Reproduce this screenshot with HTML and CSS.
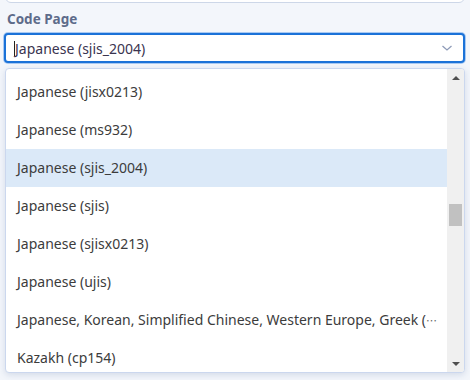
FILE: index.html
```html
<!DOCTYPE html>
<html lang="en">
<head>
    <meta charset="UTF-8">
    <title>Code Page</title>
    <link rel="stylesheet" href="styles.css">
</head>
<body>

<div class="prev-box"></div>

<div class="field">
    <label class="field-label">Code Page</label>
    <div class="select-box">
        <span class="caret"></span>
        <span class="select-value">Japanese (sjis_2004)</span>
        <svg class="chevron" width="12" height="8" viewBox="0 0 12 8">
            <polyline points="1.5,2 6,6 10.5,2" fill="none" stroke="#8e9bb8" stroke-width="1.3"/>
        </svg>
    </div>

    <div class="dropdown">
        <ul class="options">
            <li><span>Japanese (jisx0213)</span></li>
            <li><span>Japanese (ms932)</span></li>
            <li class="selected"><span>Japanese (sjis_2004)</span></li>
            <li><span>Japanese (sjis)</span></li>
            <li><span>Japanese (sjisx0213)</span></li>
            <li><span>Japanese (ujis)</span></li>
            <li><span>Japanese, Korean, Simplified Chinese, Western Europe, Greek (cp1252)</span></li>
            <li><span>Kazakh (cp154)</span></li>
        </ul>
        <div class="scrollbar">
            <div class="arrow up"></div>
            <div class="track"><div class="thumb"></div></div>
            <div class="arrow down"></div>
        </div>
    </div>
</div>

</body>
</html>
```

FILE: styles.css
```css
body {
    margin: 0;
    background-color: #f3f6fb;
    font-family: "Noto Sans", "Open Sans", sans-serif;
    color: #333;
    height: 380px;
    overflow: hidden;
}
.prev-box {
    height: 23px;
    margin: -20px 5px 0 5px;
    background-color: white;
    border: 1px solid #cdd7e8;
    border-radius: 0 0 6px 6px;
    box-sizing: border-box;
}
.field {
    padding: 0 5px 0 4px;
}
.field-label {
    display: block;
    font-size: 13.5px;
    font-weight: bold;
    color: #5d6b8a;
    margin: 7px 0 5px 3px;
    line-height: 18px;
}
.select-box {
    height: 30px;
    border: 2px solid #1b72d8;
    border-radius: 4px;
    box-shadow: 0 0 0 1px #a9c9f2;
    background-color: white;
    box-sizing: border-box;
    display: flex;
    align-items: center;
    padding: 0 10px 0 8px;
    font-size: 14px;
}
.caret {
    width: 1px;
    height: 15px;
    background-color: #222;
}
.select-value {
    flex: 1;
    color: #3a3450;
}
.chevron {
    display: block;
}
.dropdown {
    margin: 5px 0 0 1px;
    height: 305px;
    background-color: white;
    border: 1px solid #cbd7ee;
    border-radius: 4px;
    box-shadow: 0 2px 6px rgba(120, 140, 180, 0.25);
    display: flex;
    overflow: hidden;
    box-sizing: border-box;
}
.options {
    flex: 1;
    min-width: 0;
    list-style: none;
    margin: 0;
    padding: 4px 0 0 0;
    color: #3c3c3c;
}
.options li {
    height: 38px;
    line-height: 38px;
    padding: 0 8px 0 11px;
    white-space: nowrap;
    overflow: hidden;
    text-overflow: ellipsis;
    font-family: "Noto Sans CJK JP", sans-serif;
    font-size: 11px;
    color: #666;
}
.options li span {
    font-family: "Noto Sans", "Open Sans", sans-serif;
    font-size: 14px;
    color: #3c3c3c;
}
.options li.selected {
    background-color: #dbe9f8;
}
.scrollbar {
    width: 17px;
    background-color: #f0f0f0;
    display: flex;
    flex-direction: column;
}
.arrow {
    height: 17px;
    display: flex;
    align-items: center;
    justify-content: center;
}
.arrow::before {
    content: "";
    border-left: 4px solid transparent;
    border-right: 4px solid transparent;
}
.arrow.up::before {
    border-bottom: 4px solid #505050;
}
.arrow.down::before {
    border-top: 4px solid #505050;
}
.track {
    flex: 1;
    padding-top: 118px;
}
.thumb {
    height: 22px;
    margin: 0 2px;
    background-color: #c1c1c1;
}
```
